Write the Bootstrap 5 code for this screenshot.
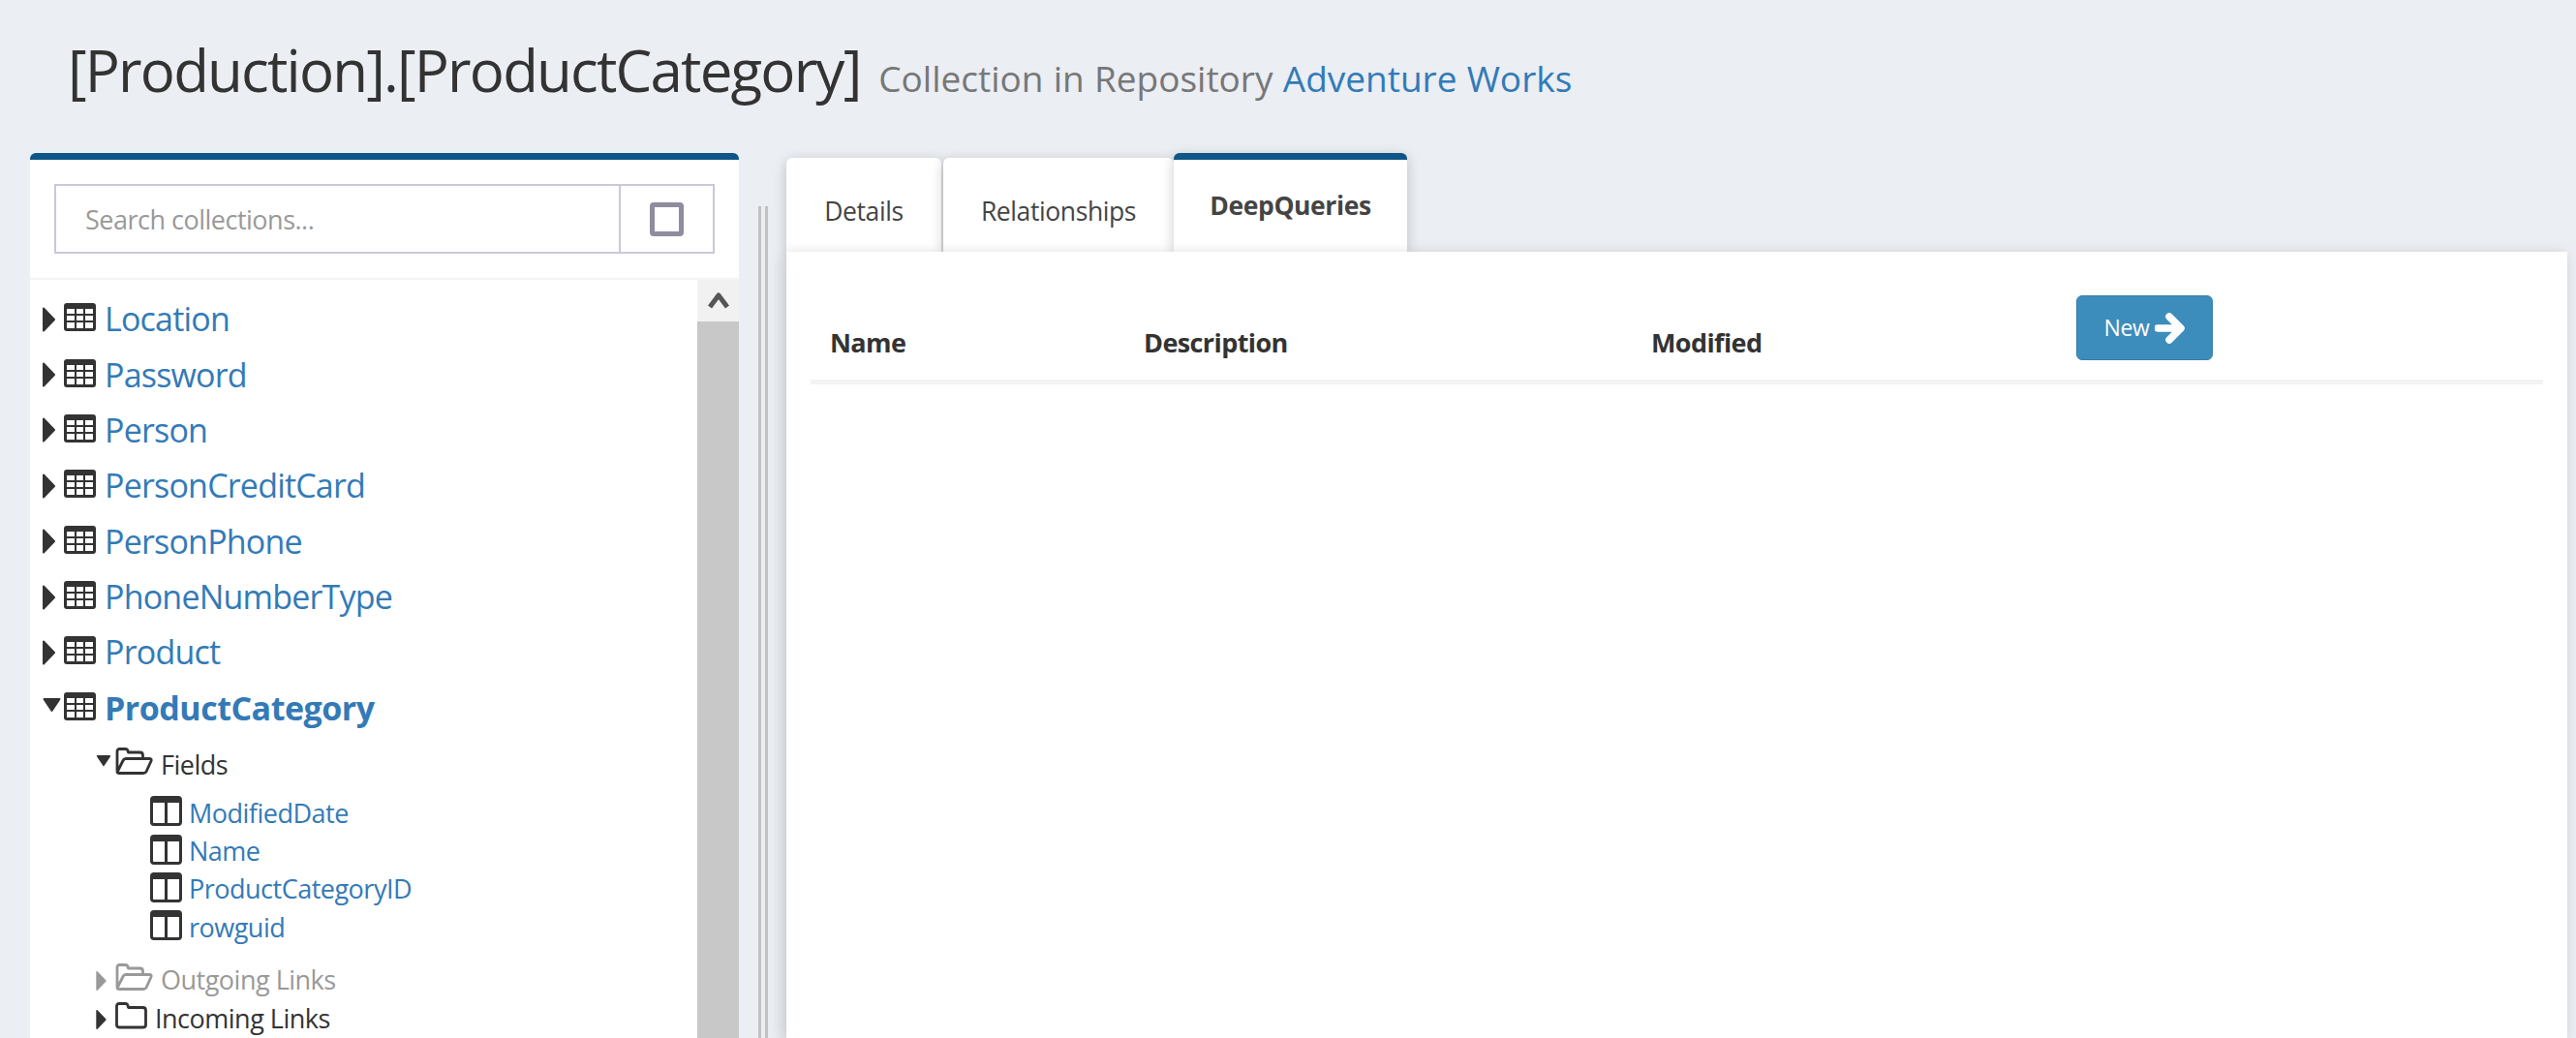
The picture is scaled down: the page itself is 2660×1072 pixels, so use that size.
<!DOCTYPE html>
<html>
<head>
  <title>[Production].[ProductCategory]</title>
  <link href="https://cdn.jsdelivr.net/npm/bootstrap@5.3.2/dist/css/bootstrap.min.css" rel="stylesheet">
  <style>
    html, body { height: 100%; }
    body {
      background: #ebeef3;
      color: #333;
      font-family: "Open Sans", "Liberation Sans", sans-serif;
      overflow: hidden;
    }
    a { color: #337ab7; text-decoration: none; }

    /* page header */
    .page-head { height: 158px; padding: 36px 0 0 70px; }
    .page-head h1 { font-size: 60px; font-weight: 400; line-height: 72px; letter-spacing: -1.8px; margin: 0; white-space: nowrap; }
    .page-head .sub-title { font-size: 37px; font-weight: 400; color: #777; letter-spacing: 0; margin-left: 5px; word-spacing: .6px; }

    .page-main { height: 914px; padding-left: 31px; }

    /* left panel */
    .side-panel { width: 732px; background: #fff; border-top: 7px solid #0f5587; border-radius: 6px 6px 0 0; }
    .search-wrap { height: 124px; padding: 25px 25px 0; border-bottom: 2px solid #f4f4f4; }
    .search-wrap .input-group { height: 72px; }
    .search-wrap .form-control {
      border: 2px solid #c9c8da; border-radius: 0; font-size: 27px; padding: 2px 30px 0; letter-spacing: -.5px;
    }
    .search-wrap .form-control::placeholder { color: #999; }
    .search-btn { width: 98px; background: #fff; border: 2px solid #c9c8da; border-left: 0; border-radius: 0; }
    .square-icon { display: block; width: 35px; height: 35px; border: 5.500px solid #8e8c9e; border-radius: 4px; margin: auto; }

    .tree-box { padding-top: 12px; overflow: hidden; }
    .tree-row { height: 57.4px; font-size: 34px; letter-spacing: -.8px; white-space: nowrap; }
    .tree-row a.fw-bold { letter-spacing: -.5px; }
    .tree-row .tree-caret { width: 13px; height: 30px; margin-left: 13px; }
    .tree-row .tree-caret-down { width: 19px; height: 30px; margin-left: 13px; margin-right: -6px; }
    .tree-row .table-ico { width: 33px; height: 29px; margin: 0 11px 4px 9px; }
    .tree-row a { margin-left: -2px; }
    .tree-sub { height: 60px; padding-left: 67px; font-size: 27px; letter-spacing: -.5px; }
    .tree-sub .tree-caret { width: 13px; height: 24px; }
    .tree-sub .tree-caret-down { width: 18px; height: 24px; margin-right: -5px; margin-bottom: 4px; }
    .tree-sub .folder-ico { width: 39px; height: 28px; margin: 0 8px 8px; flex: none; }
    .tree-sub-off { margin-top: 15px; height: 40px; color: #999; }
    .tree-sub-last { height: 40px; }
    .tree-sub-last .folder-ico { width: 33px; }
    .tree-field { height: 39.4px; padding-left: 124px; font-size: 27px; letter-spacing: -.5px; }
    .tree-field svg { width: 33px; height: 31px; margin: 0 7px 4px 0; flex: none; }

    .fake-scroll { width: 43px; background: #c8c8c8; }
    .fake-scroll-up { height: 43px; background: #f1f1f1; }
    .fake-scroll-up svg { width: 22px; height: 18px; }

    /* splitter */
    .split-bar { width: 10px; margin: 55px 19px 0 20px; border-left: 3px solid #c2c2c2; border-right: 3px solid #c2c2c2; }

    /* right panel */
    .main-side { width: 1839px; }
    .main-tabs { height: 102px; border: 0; gap: 2px; align-items: flex-end; }
    .main-tabs .nav-link {
      height: 97px; margin: 0; padding: 36px 0 0; text-align: center; font-size: 26.500px; letter-spacing: -.4px;
      color: #444; background: #fff; border: 0; border-radius: 6px 6px 0 0;
      box-shadow: 0 3px 14px rgba(0, 0, 0, .2);
    }
    .main-tabs .tab-a { width: 160px; }
    .main-tabs .tab-b { width: 238px; margin-right: -2px; }
    .main-tabs .nav-link.active {
      width: 241px; height: 102px; padding-top: 28px; font-weight: 700; color: #444;
      border-top: 7px solid #0f5587; position: relative;
    }
    .main-body { background: #fff; height: 812px; padding: 45px 25px 0; position: relative; box-shadow: -3px 3px 14px rgba(0, 0, 0, .18); }
    .query-table { table-layout: fixed; width: 1789px; margin: 0; }
    .query-table th {
      font-size: 27px; line-height: 40px; font-weight: 700; letter-spacing: -.6px; color: #333;
      padding: 0 20px 18px; vertical-align: bottom; border-bottom: 5px solid #f3f3f3;
      box-shadow: none; background: transparent;
    }
    .query-table .col-name { width: 324px; }
    .query-table .col-desc { width: 524px; }
    .query-table .col-mod { width: 439px; }
    .query-table th.cell-btn { padding-bottom: 20px; }
    .btn-new {
      width: 141px; height: 67px; padding: 0; background: #3c8dbc; border: 1px solid #367fa9; border-radius: 6px;
      color: #fff; font-size: 23px; letter-spacing: -.4px;
    }
    .btn-new svg { width: 31px; height: 32px; margin-left: 6px; }
  </style>
</head>
<body>

<svg width="0" height="0" class="d-block">
  <symbol id="icoTable" viewBox="0 0 33 29">
    <rect width="33" height="29" rx="3" fill="#333"/>
    <g fill="#fff">
      <rect x="3" y="6" width="8" height="5"/><rect x="13" y="6" width="7" height="5"/><rect x="22" y="6" width="8" height="5"/>
      <rect x="3" y="13" width="8" height="5"/><rect x="13" y="13" width="7" height="5"/><rect x="22" y="13" width="8" height="5"/>
      <rect x="3" y="20" width="8" height="6"/><rect x="13" y="20" width="7" height="6"/><rect x="22" y="20" width="8" height="6"/>
    </g>
  </symbol>
  <symbol id="icoField" viewBox="0 0 33 31">
    <rect x="1.500" y="1.500" width="30" height="28" rx="2.500" fill="none" stroke="#333" stroke-width="3"/>
    <rect x="1" y="1" width="31" height="6" fill="#333"/>
    <rect x="15" y="3" width="3" height="26" fill="#333"/>
  </symbol>
  <symbol id="icoFolderOpen" viewBox="0 0 39 28">
    <path d="M2 24V4q0-2.500 2.500-2.500h6q2 0 2.500 2l.5 1.500h12q3 0 3 3v3M2 25.500l6-12q1-2 3-2h24q3 0 2 2.500l-5 11q-1 1.500-3 1.500H4q-2 0-2-1.500z" fill="none" stroke="currentColor" stroke-width="2.800" stroke-linejoin="round"/>
  </symbol>
  <symbol id="icoFolder" viewBox="0 0 33 28">
    <path d="M1.500 4q0-2.500 2.500-2.500h6.500q2 0 2.500 2l.5 2h15q3 0 3 3v15q0 2.500-3 2.500H4q-2.500 0-2.500-2.500z" fill="none" stroke="#333" stroke-width="2.800" stroke-linejoin="round"/>
  </symbol>
  <symbol id="icoRight" viewBox="0 0 13 30">
    <path d="M1 3.500 12 15 1 26.500z" fill="currentColor" stroke="currentColor" stroke-width="2" stroke-linejoin="round"/>
  </symbol>
  <symbol id="icoDown" viewBox="0 0 19 30">
    <path d="M1.500 6h16L9.500 18z" fill="currentColor" stroke="currentColor" stroke-width="2" stroke-linejoin="round"/>
  </symbol>
</svg>

<div class="page-head">
  <h1>[Production].[ProductCategory] <span class="sub-title">Collection in Repository <a href="#">Adventure Works</a></span></h1>
</div>

<div class="page-main d-flex">
  <!-- Collections -->
  <div class="side-panel d-flex flex-column">
    <div class="search-wrap">
      <div class="input-group">
        <input type="text" class="form-control" placeholder="Search collections...">
        <button type="button" class="search-btn d-flex align-items-center"><span class="square-icon"></span></button>
      </div>
    </div>
    <div class="d-flex flex-grow-1 overflow-hidden">
      <div class="tree-box flex-grow-1">
        <div class="tree-row d-flex align-items-center"><svg class="tree-caret"><use href="#icoRight"/></svg><svg class="table-ico"><use href="#icoTable"/></svg><a href="#">Location</a></div>
        <div class="tree-row d-flex align-items-center"><svg class="tree-caret"><use href="#icoRight"/></svg><svg class="table-ico"><use href="#icoTable"/></svg><a href="#">Password</a></div>
        <div class="tree-row d-flex align-items-center"><svg class="tree-caret"><use href="#icoRight"/></svg><svg class="table-ico"><use href="#icoTable"/></svg><a href="#">Person</a></div>
        <div class="tree-row d-flex align-items-center"><svg class="tree-caret"><use href="#icoRight"/></svg><svg class="table-ico"><use href="#icoTable"/></svg><a href="#">PersonCreditCard</a></div>
        <div class="tree-row d-flex align-items-center"><svg class="tree-caret"><use href="#icoRight"/></svg><svg class="table-ico"><use href="#icoTable"/></svg><a href="#">PersonPhone</a></div>
        <div class="tree-row d-flex align-items-center"><svg class="tree-caret"><use href="#icoRight"/></svg><svg class="table-ico"><use href="#icoTable"/></svg><a href="#">PhoneNumberType</a></div>
        <div class="tree-row d-flex align-items-center"><svg class="tree-caret"><use href="#icoRight"/></svg><svg class="table-ico"><use href="#icoTable"/></svg><a href="#">Product</a></div>
        <div class="tree-row d-flex align-items-center"><svg class="tree-caret-down"><use href="#icoDown"/></svg><svg class="table-ico"><use href="#icoTable"/></svg><a href="#" class="fw-bold">ProductCategory</a></div>

        <div class="tree-sub d-flex align-items-center"><svg class="tree-caret-down"><use href="#icoDown"/></svg><svg class="folder-ico"><use href="#icoFolderOpen"/></svg>Fields</div>
        <div class="tree-field d-flex align-items-center"><svg><use href="#icoField"/></svg><a href="#">ModifiedDate</a></div>
        <div class="tree-field d-flex align-items-center"><svg><use href="#icoField"/></svg><a href="#">Name</a></div>
        <div class="tree-field d-flex align-items-center"><svg><use href="#icoField"/></svg><a href="#">ProductCategoryID</a></div>
        <div class="tree-field d-flex align-items-center"><svg><use href="#icoField"/></svg><a href="#">rowguid</a></div>
        <div class="tree-sub tree-sub-off d-flex align-items-center"><svg class="tree-caret"><use href="#icoRight"/></svg><svg class="folder-ico"><use href="#icoFolderOpen"/></svg>Outgoing Links</div>
        <div class="tree-sub tree-sub-last d-flex align-items-center"><svg class="tree-caret"><use href="#icoRight"/></svg><svg class="folder-ico"><use href="#icoFolder"/></svg>Incoming Links</div>
      </div>
      <div class="fake-scroll flex-shrink-0">
        <div class="fake-scroll-up d-flex align-items-center justify-content-center">
          <svg viewBox="0 0 22 18"><path d="M2 16 11 4l9 12" fill="none" stroke="#555" stroke-width="5" stroke-linejoin="round"/></svg>
        </div>
      </div>
    </div>
  </div>

  <div class="split-bar flex-shrink-0"></div>

  <!-- Tabs -->
  <div class="main-side flex-shrink-0">
    <ul class="nav nav-tabs main-tabs">
      <li class="nav-item"><a class="nav-link tab-a" href="#">Details</a></li>
      <li class="nav-item"><a class="nav-link tab-b" href="#">Relationships</a></li>
      <li class="nav-item"><a class="nav-link active" href="#">DeepQueries</a></li>
    </ul>
    <div class="main-body">
      <table class="table query-table">
        <thead>
          <tr>
            <th class="col-name">Name</th>
            <th class="col-desc">Description</th>
            <th class="col-mod">Modified</th>
            <th class="cell-btn">
              <button type="button" class="btn btn-new d-inline-flex align-items-center justify-content-center">New<svg viewBox="0 0 31 32"><path d="M3 16h20M15 4l12 12-12 12" fill="none" stroke="#fff" stroke-width="7.500" stroke-linecap="round" stroke-linejoin="round"/></svg></button>
            </th>
          </tr>
        </thead>
        <tbody></tbody>
      </table>
    </div>
  </div>
</div>

<script src="https://cdn.jsdelivr.net/npm/bootstrap@5.3.2/dist/js/bootstrap.bundle.min.js"></script>
</body>
</html>
